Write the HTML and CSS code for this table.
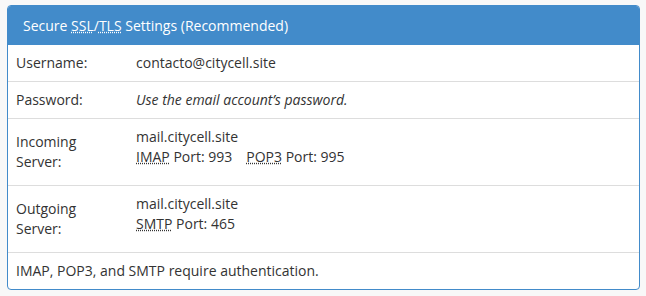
FILE: index.html
```html
<!DOCTYPE html>
<html lang="en">
<head>
    <meta charset="UTF-8">
    <title>Mail Client Settings</title>
    <link rel="stylesheet" href="styles.css">
</head>
<body>

    <div class="panel">
        <div class="panel-heading">
            Secure <abbr title="Secure Sockets Layer">SSL</abbr>/<abbr title="Transport Layer Security">TLS</abbr> Settings (Recommended)
        </div>
        <table class="settings">
            <tr>
                <td class="label">Username:</td>
                <td>contacto@citycell.site</td>
            </tr>
            <tr>
                <td class="label">Password:</td>
                <td><em>Use the email account’s password.</em></td>
            </tr>
            <tr>
                <td class="label">Incoming Server:</td>
                <td>
                    <div class="server">
                        mail.citycell.site<br>
                        <abbr title="Internet Message Access Protocol">IMAP</abbr> Port: 993<span class="port"><abbr title="Post Office Protocol 3">POP3</abbr> Port: 995</span>
                    </div>
                </td>
            </tr>
            <tr>
                <td class="label">Outgoing Server:</td>
                <td>
                    <div class="server">
                        mail.citycell.site<br>
                        <abbr title="Simple Mail Transfer Protocol">SMTP</abbr> Port: 465
                    </div>
                </td>
            </tr>
            <tr>
                <td colspan="2">IMAP, POP3, and SMTP require authentication.</td>
            </tr>
        </table>
    </div>

</body>
</html>
```

FILE: styles.css
```css
body {
    margin: 0;
    padding: 5px 7px 0 7px;
    font-family: 'Open Sans', sans-serif;
    font-size: 14px;
    line-height: 20px;
    color: #333;
    background-color: #f8f8f8;
}

.panel {
    width: 633px;
    box-sizing: border-box;
    background-color: #fff;
    border: 1px solid #428bca;
    border-radius: 4px;
    overflow: hidden;
}

.panel-heading {
    padding: 10px 15px 9px 15px;
    background-color: #428bca;
    color: #fff;
}

abbr {
    text-decoration: underline dotted;
    text-underline-offset: 1px;
}

.settings {
    width: 100%;
    border-collapse: collapse;
    table-layout: fixed;
}

.settings td {
    padding: 8px;
    vertical-align: middle;
    border-top: 1px solid #ddd;
}

.settings tr:first-child td {
    border-top: none;
}

.settings td.label {
    width: 104px;
}

/* server cells carry an extra line of space below */
.server {
    padding-bottom: 10px;
}

.port {
    margin-left: 14px;
}
```
